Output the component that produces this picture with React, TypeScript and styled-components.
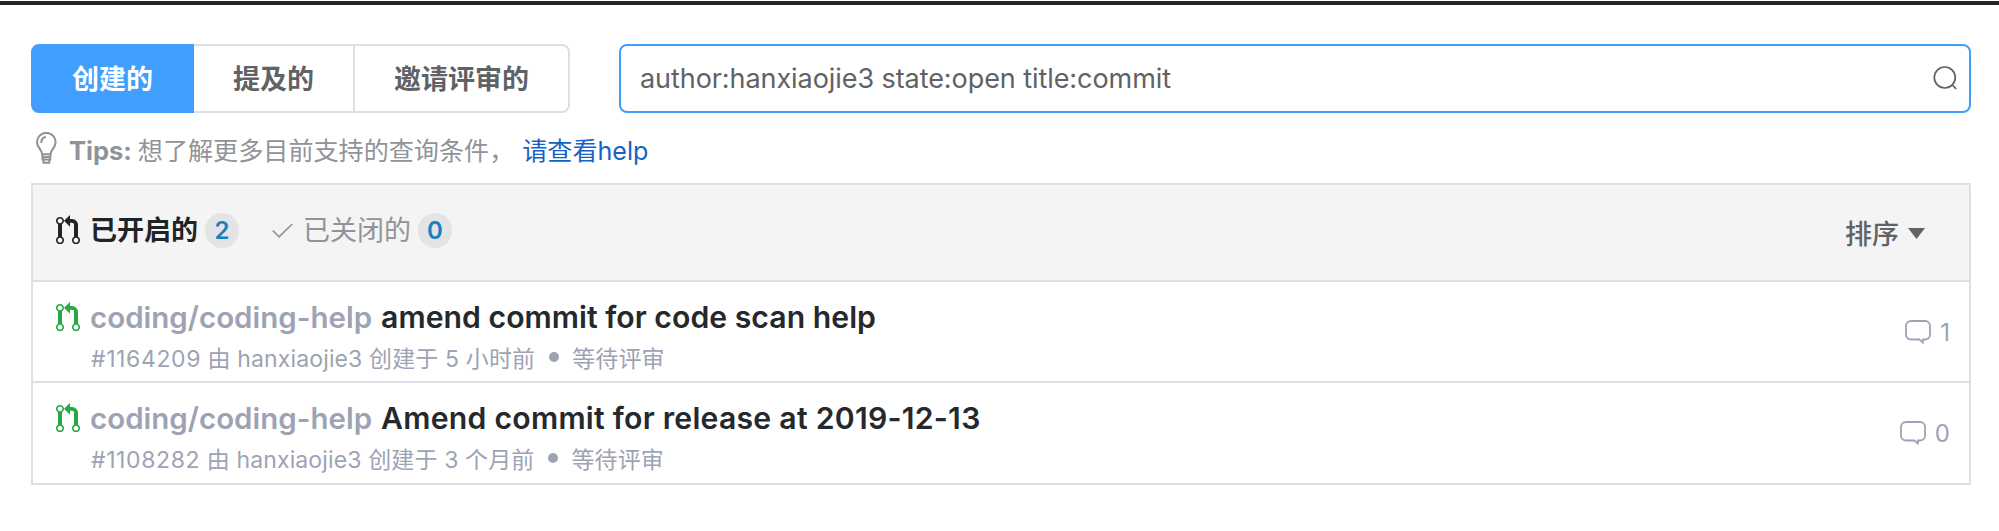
import React from "react";
import styled, { createGlobalStyle } from "styled-components";

const GlobalStyle = createGlobalStyle`
  * { box-sizing: border-box; }
  body {
    margin: 0;
    background: #fff;
    font-family: Inter, "Noto Sans CJK SC", sans-serif;
    color: #606266;
  }
  svg { display: block; flex: none; }
`;

const Page = styled.div`
  padding: 1px 0 0;
`;

const TopLine = styled.div`
  height: 4px;
  background: #20282d;
`;

const Content = styled.main`
  padding: 39px 28px 0 31px;
`;

const Toolbar = styled.div`
  display: flex;
  height: 69px;
`;

const TabGroup = styled.div`
  display: flex;
  width: 539px;
  margin-right: 49px;
`;

const Tab = styled.button<{ $active?: boolean; $width: number }>`
  width: ${(p) => p.$width}px;
  padding: 0 0 2px;
  border: 2px solid ${(p) => (p.$active ? "#409eff" : "#dcdfe6")};
  border-left-width: ${(p) => (p.$active ? 2 : 0)}px;
  background: ${(p) => (p.$active ? "#409eff" : "#fff")};
  color: ${(p) => (p.$active ? "#fff" : "#606266")};
  font: 700 27px/40px "Noto Sans CJK SC", sans-serif;
  &:first-child { border-radius: 8px 0 0 8px; }
  &:last-child { border-radius: 0 8px 8px 0; }
`;

const SearchBox = styled.div`
  flex: 1;
  display: flex;
  align-items: center;
  justify-content: space-between;
  padding: 0 12px 0 19px;
  border: 2px solid #409eff;
  border-radius: 8px;
  font-size: 27px;
  line-height: 40px;
  letter-spacing: -0.07px;
  svg { margin-bottom: 1px; }
`;

const Tips = styled.div`
  display: flex;
  align-items: center;
  height: 48px;
  margin: 13px 0 9px;
  padding-left: 4px;
  color: #909399;
  font-size: 25.1px;
  line-height: 36px;
`;

const TipsIcon = styled.div`
  padding-bottom: 3px;
`;

const TipsLabel = styled.b`
  margin: 1px 6px 0 11px;
  font-size: 25.5px;
`;

const TipsText = styled.span`
  padding-top: 2px;
`;

const HelpLink = styled.a`
  margin-left: 8px;
  padding-top: 2px;
  color: #1661c8;
`;

const Panel = styled.section`
  border: 2px solid #dcdfe6;
`;

const PanelHeader = styled.header`
  display: flex;
  align-items: center;
  height: 95px;
  padding: 0 44px 4px 23px;
  background: #f4f4f4;
`;

const StateTab = styled.div<{ $active?: boolean }>`
  display: flex;
  align-items: center;
  margin-right: 33px;
  color: ${(p) => (p.$active ? "#1f2429" : "#909399")};
  font: ${(p) => (p.$active ? 700 : 400)} 27px/40px "Noto Sans CJK SC", sans-serif;
`;

const StateLabel = styled.span`
  margin: -3px 7px 0 10px;
`;

const Badge = styled.span`
  width: 34px;
  height: 35px;
  border-radius: 18px;
  background: #e3e4e6;
  color: #1b7fbd;
  font: 600 24px/35px Inter, sans-serif;
  text-align: center;
`;

const Sort = styled.div`
  display: flex;
  align-items: center;
  gap: 9px;
  margin: 5px 0 0 auto;
  font: 500 27px/40px "Noto Sans CJK SC", sans-serif;
`;

const Row = styled.article`
  display: flex;
  height: 101px;
  padding: 14px 19px 0 23px;
  border-top: 2px solid #dcdfe6;
  color: #9da3b4;
  &:last-child { height: 102px; }
`;

const RowIcon = styled.div`
  width: 34px;
  padding-top: 6px;
`;

const RowBody = styled.div`
  flex: 1;
`;

const Title = styled.h3<{ $tracking: number }>`
  margin: 0;
  color: #25282d;
  font-size: 30.2px;
  font-weight: 600;
  line-height: 42px;
  letter-spacing: ${(p) => p.$tracking}px;
`;

const Repo = styled.span`
  margin-right: 9px;
  color: #9da3b4;
  font-size: 29.5px;
  letter-spacing: 0;
`;

const Meta = styled.div`
  display: flex;
  align-items: center;
  height: 38px;
  padding-left: 1px;
  font-size: 23px;
  letter-spacing: 0.13px;
`;

const RequestId = styled.span`
  letter-spacing: 0.6px;
`;

const Dot = styled.i`
  width: 10px;
  height: 10px;
  margin: 0 13px 0 14px;
  border-radius: 50%;
  background: #9da3b4;
`;

const Comments = styled.div`
  display: flex;
  align-items: center;
  gap: 9px;
  height: 34px;
  margin-top: 19px;
  font-size: 24px;
`;

const PullIcon = ({ color }: { color: string }) => (
  <svg width="24" height="31" viewBox="0 0 12 16" preserveAspectRatio="none" fill={color}>
    <path d="M11 11.28V5c-.03-.78-.34-1.47-.94-2.06C9.46 2.35 8.78 2.03 8 2H7V0L4 3l3 3V4h1c.27.02.48.11.69.31.21.2.3.42.31.69v6.28A1.993 1.993 0 0 0 10 15a1.993 1.993 0 0 0 1-3.72zm-1 2.92c-.66 0-1.2-.55-1.2-1.2 0-.65.55-1.2 1.2-1.2.65 0 1.2.55 1.2 1.2 0 .65-.55 1.2-1.2 1.2zM4 3c0-1.11-.89-2-2-2a1.993 1.993 0 0 0-1 3.72v6.56A1.993 1.993 0 0 0 2 15a1.993 1.993 0 0 0 1-3.72V4.72c.59-.34 1-.98 1-1.72zm-.8 10c0 .66-.55 1.2-1.2 1.2-.65 0-1.2-.55-1.2-1.2 0-.65.55-1.2 1.2-1.2.65 0 1.2.55 1.2 1.2zM2 4.2C1.34 4.2.8 3.65.8 3c0-.65.55-1.2 1.2-1.2.65 0 1.2.55 1.2 1.2 0 .65-.55 1.2-1.2 1.2z" />
  </svg>
);

const BulbIcon = () => (
  <svg width="23" height="33" viewBox="0 0 23 33" fill="none" stroke="#909399" strokeWidth="2.1">
    <path d="M7.2 22.2C7 17.6 2 15.8 2 10.2a9.3 9.3 0 0 1 18.6 0c0 5.600-4.800 7.400-5.100 12z" />
    <path d="M6.200 11c0-3.200 1.900-5.500 4.600-6.200M7.500 22v5.500h7.800V22M7.500 25h7.800M8.500 28v2.700h5.800V28" />
  </svg>
);

const SearchIcon = () => (
  <svg width="24" height="24" viewBox="0 0 24 24" fill="none" stroke="#606266" strokeWidth="1.7">
    <circle cx="11.800" cy="11.500" r="10.500" />
    <path d="M18.700 18.500l4.500 4.300" />
  </svg>
);

const CheckIcon = () => (
  <svg width="21" height="16" viewBox="0 0 21 16" fill="none" stroke="#909399" strokeWidth="1.7">
    <path d="M.7 7.500l6.300 6.300L20.300 1" />
  </svg>
);

const CaretIcon = () => (
  <svg width="17" height="11" viewBox="0 0 17 11" fill="#606266">
    <path d="M0 0h17l-8.500 11z" />
  </svg>
);

const CommentIcon = () => (
  <svg width="26" height="24" viewBox="0 0 26 24" fill="none" stroke="#9da3b4" strokeWidth="1.800">
    <path d="M6 1h14a5 5 0 0 1 5 5v8.500a5 5 0 0 1-5 5h-2l-.1 3-3.700-3H6a5 5 0 0 1-5-5V6a5 5 0 0 1 5-5z" />
  </svg>
);

const requests = [
  { id: "#1164209", repo: "coding/coding-help", title: "amend commit for code scan help", tracking: 0.03, meta: "由 hanxiaojie3 创建于 5 小时前", status: "等待评审", comments: 1 },
  { id: "#1108282", repo: "coding/coding-help", title: "Amend commit for release at 2019-12-13", tracking: 0.25, meta: "由 hanxiaojie3 创建于 3 个月前", status: "等待评审", comments: 0 },
];

export default function App() {
  return (
    <Page>
      <GlobalStyle />
      <TopLine />
      <Content>
        <Toolbar>
          <TabGroup>
            <Tab $active $width={163}>创建的</Tab>
            <Tab $width={161}>提及的</Tab>
            <Tab $width={215}>邀请评审的</Tab>
          </TabGroup>
          <SearchBox>
            <span>author:hanxiaojie3 state:open title:commit</span>
            <SearchIcon />
          </SearchBox>
        </Toolbar>
        <Tips>
          <TipsIcon><BulbIcon /></TipsIcon>
          <TipsLabel>Tips:</TipsLabel>
          <TipsText>想了解更多目前支持的查询条件，</TipsText>
          <HelpLink>请查看help</HelpLink>
        </Tips>
        <Panel>
          <PanelHeader>
            <StateTab $active>
              <PullIcon color="#1f2429" />
              <StateLabel>已开启的</StateLabel>
              <Badge>2</Badge>
            </StateTab>
            <StateTab>
              <CheckIcon />
              <StateLabel>已关闭的</StateLabel>
              <Badge>0</Badge>
            </StateTab>
            <Sort>
              排序
              <CaretIcon />
            </Sort>
          </PanelHeader>
          {requests.map((r) => (
            <Row key={r.id}>
              <RowIcon><PullIcon color="#28a745" /></RowIcon>
              <RowBody>
                <Title $tracking={r.tracking}><Repo>{r.repo}</Repo>{r.title}</Title>
                <Meta>
                  <span><RequestId>{r.id}</RequestId> {r.meta}</span>
                  <Dot />
                  <span>{r.status}</span>
                </Meta>
              </RowBody>
              <Comments>
                <CommentIcon />
                {r.comments}
              </Comments>
            </Row>
          ))}
        </Panel>
      </Content>
    </Page>
  );
}
